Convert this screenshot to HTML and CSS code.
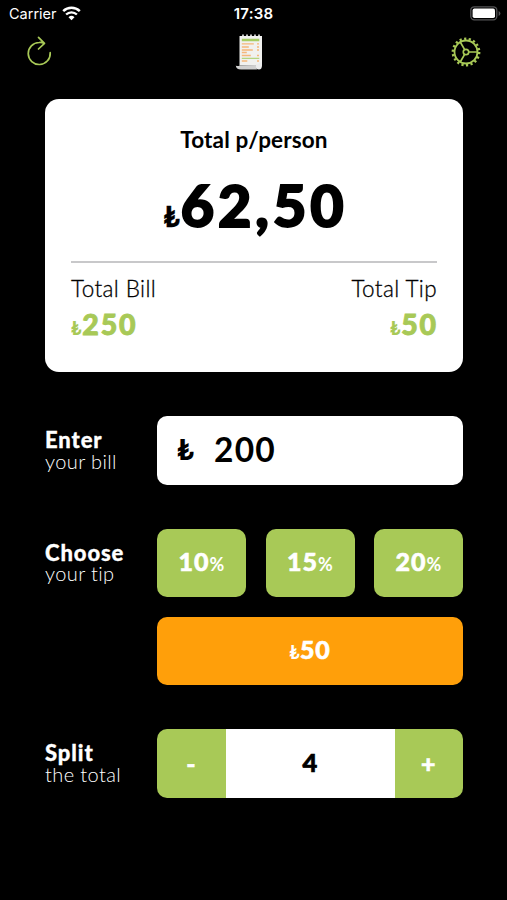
FILE: index.html
```html
<!DOCTYPE html>
<html lang="en">
<head>
<meta charset="utf-8">
<title>Tip Calculator</title>
<link rel="stylesheet" href="styles.css">
</head>
<body>
<header class="status">
  <div class="carrier"><span>Carrier</span>
    <svg class="wifi" width="19" height="15" viewBox="0 0 19 15"><path d="M1.2 5.2a12 12 0 0 1 16.6 0" fill="none" stroke="#fff" stroke-width="2.5"/><path d="M4.1 8.5a7.8 7.8 0 0 1 10.8 0" fill="none" stroke="#fff" stroke-width="2.4"/><path d="M6.5 11.2a4.5 4.5 0 0 1 6 0L9.5 14.2z" fill="#fff"/></svg>
  </div>
  <span class="clock">17:38</span>
  <svg class="battery" width="31" height="15" viewBox="0 0 31 15"><rect x=".8" y=".8" width="26" height="13" rx="3.5" fill="none" stroke="#545456" stroke-width="1.3"/><rect x="2.6" y="2.6" width="22.4" height="9.4" rx="1.8" fill="#fff"/><path d="M28.6 5v5q1.8-.7 1.8-2.5T28.600 5z" fill="#545456"/></svg>
</header>
<nav class="toolbar">
  <svg class="refresh" width="26" height="32" viewBox="0 0 26 32" fill="none" stroke="#a8c957" stroke-width="1.7" stroke-linecap="round" stroke-linejoin="round"><path d="M23.200 17.700A11 11 0 1 1 12.200 7.500Q14.500 7.200 17.200 8.300M11.500 2.300L17.500 8.300L11.500 14"/></svg>
  <svg class="receipt" width="30" height="38" viewBox="0 0 30 38"><path d="M4.500 3V32.500H27V3H24.800V1.600H23.200V3H20.800V1.600H19.200V3H16.800V1.600H15.200V3H12.800V1.600H11.200V3H8.800V1.600H7.200V3z" fill="#f1f1ef"/><path d="M.8 32.500Q2.500 33.700 4.700 32.500L20.500 32L22 36.500H6Q1 36.500 .8 32.500z" fill="#d0d0d0"/><path d="M20.500 32Q20.500 36.500 24 36.500Q27 36.500 27 32V29z" fill="#ececec"/><path d="M6.800 7h17.500" stroke="#a6cd62" stroke-width="2.500"/><path d="M6.800 10.800h12M6.800 14h7M6.800 17h11M6.800 19.500h5M6.800 22.500h9M6.800 28h5.500M22 10.800h2M22 14h2M22 17h2M22 22.500h2M22 28h2" stroke="#f5b77a" stroke-width="1.300"/><path d="M6.800 25.300h17.500" stroke="#a6cd62" stroke-width="1"/></svg>
  <svg class="gear" width="30" height="30" viewBox="-15 -15 30 30" fill="none" stroke="#a8c957"><circle r="11.500" stroke-width="1.800"/><circle r="13.200" stroke-width="2.400" stroke-dasharray="2.200 2.408"/><circle r="2.700" stroke-width="1.700"/><path d="M2.700 0H11.500M-1.350-2.340L-5.750-9.960M-1.350 2.340L-5.750 9.960" stroke-width="1.700"/></svg>
</nav>
<main>
  <section class="card">
    <h1>Total p/person</h1>
    <div class="amount"><small>₺</small><span>62,50</span></div>
    <hr>
    <div class="totals">
      <div><div class="label">Total Bill</div><div class="value"><small>₺</small>250</div></div>
      <div class="right"><div class="label">Total Tip</div><div class="value"><small>₺</small>50</div></div>
    </div>
  </section>
  <section class="row">
    <div class="caption"><strong>Enter</strong><span>your bill</span></div>
    <div class="field"><span class="lira">₺</span><span class="bill">200</span></div>
  </section>
  <section class="row">
    <div class="caption"><strong>Choose</strong><span>your tip</span></div>
    <div class="tips">
      <button>10<small>%</small></button>
      <button>15<small>%</small></button>
      <button>20<small>%</small></button>
      <button class="custom"><small>₺</small>50</button>
    </div>
  </section>
  <section class="row">
    <div class="caption"><strong>Split</strong><span>the total</span></div>
    <div class="stepper"><button>-</button><output>4</output><button>+</button></div>
  </section>
</main>
</body>
</html>
```
FILE: styles.css
```css
* { box-sizing: border-box; }
body { margin: 0; height: 900px; overflow: hidden; background: #000; color: #fff; font-family: Lato, "Open Sans", sans-serif; font-variant-ligatures: none; }
svg { display: block; }
small { line-height: 1; }
.status { height: 27px; padding: 0 7px 0 9px; display: grid; grid-template-columns: 1fr auto 1fr; align-items: center; font: 400 14.500px/27px Inter, sans-serif; }
.carrier { display: flex; align-items: center; gap: 5px; }
.clock { font-size: 15px; font-weight: 600; letter-spacing: .2px; margin-right: 2px; }
.battery { justify-self: end; margin-right: -1px; }
.toolbar { height: 71.500px; padding: 5px 26px 0 27px; display: grid; grid-template-columns: 1fr auto 1fr; align-items: start; }
.refresh { margin-top: 3px; }
.receipt { margin: 1px 8px 0 0; }
.gear { margin-top: 5px; justify-self: end; }
main { padding: 0 44px 0 45px; display: flex; flex-direction: column; gap: 44px; }
.card { height: 273.500px; padding: 26px 26px 0; background: #fff; color: #000; border-radius: 14px; }
h1 { margin: 0; font-size: 22.500px; font-weight: 700; line-height: 30px; letter-spacing: .15px; text-align: center; }
.amount { margin-top: 15px; font-size: 57.500px; font-weight: 900; line-height: 70px; text-align: center; white-space: nowrap; -webkit-text-stroke: 2px currentColor; }
.amount span { letter-spacing: 4px; margin-right: -3px; padding-left: 1px; }
.amount small { font-size: 28px; -webkit-text-stroke-width: .3px; }
hr { height: 2px; margin: 21.500px 0 11.500px; border: 0; background: #c8c8ca; }
.totals { display: flex; justify-content: space-between; }
.label { font-size: 22.500px; font-weight: 300; line-height: 28px; letter-spacing: .4px; color: #000; -webkit-text-stroke: .3px currentColor; }
.right { text-align: right; }
.value { margin-top: 4px; font-size: 28.500px; font-weight: 900; line-height: 34px; letter-spacing: 1.900px; margin-right: -1px; color: #a8c957; -webkit-text-stroke: .9px currentColor; }
.value small { font-size: 18px; letter-spacing: .8px; -webkit-text-stroke-width: 0; }
.row { display: grid; grid-template-columns: 112px 1fr; align-items: start; }
.caption { height: 68.500px; padding-top: 1px; display: flex; flex-direction: column; justify-content: center; font-size: 20px; font-weight: 300; line-height: 21.500px; letter-spacing: .4px; color: #fff; }
.caption strong { font-size: 22px; font-weight: 900; letter-spacing: .9px; -webkit-text-stroke: .3px currentColor; }
.field { height: 68.500px; display: flex; align-items: center; padding-left: 20px; border-radius: 10px; background: #fff; color: #000; }
.lira { width: 37px; padding-bottom: 3px; font-size: 29px; font-weight: 900; }
.bill { padding-bottom: 3px; font-size: 33.500px; font-weight: 700; letter-spacing: 1.200px; }
.tips { display: grid; grid-template-columns: repeat(3, 1fr); gap: 19.500px; }
button { height: 68.500px; padding: 0 0 3px; border: 0; border-radius: 10px; background: #a8c957; color: #fff; font: 900 25px/30px Lato, sans-serif; letter-spacing: .9px; -webkit-text-stroke: .6px currentColor; }
button small { font-size: 18px; font-weight: 700; letter-spacing: .2px; -webkit-text-stroke-width: 0; }
.custom { grid-column: 1 / -1; background: #ff9f0a; }
.stepper { display: grid; grid-template-columns: 68.500px 1fr 68.500px; overflow: hidden; border-radius: 10px; }
.stepper button { padding-bottom: 1px; border-radius: 0; }
output { display: flex; align-items: center; justify-content: center; padding-bottom: 3px; background: #fff; color: #000; font-size: 25.500px; font-weight: 900; -webkit-text-stroke: .7px currentColor; }
```
